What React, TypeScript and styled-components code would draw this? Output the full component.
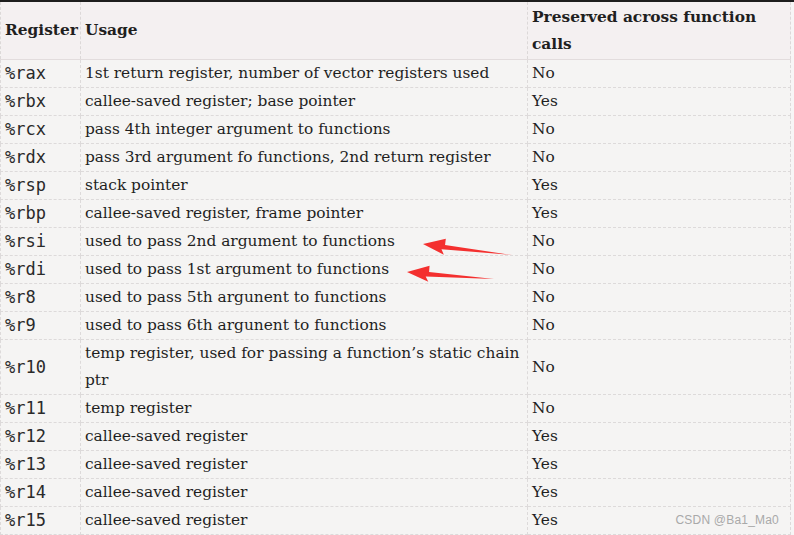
import React from "react";
import styled, { createGlobalStyle } from "styled-components";

const Global = createGlobalStyle`
  html, body { margin: 0; padding: 0; background: #f7f6f6; }
  body { width: 794px; height: 535px; overflow: hidden; }
`;

const Page = styled.div`
  position: relative;
  width: 794px;
  height: 535px;
  border-top: 2px solid #1d1d1d;
  box-sizing: border-box;
  background: #f7f6f6;
`;

const Table = styled.table`
  border-collapse: collapse;
  table-layout: fixed;
  width: 790px;
  font-family: "DejaVu Serif", "Liberation Serif", serif;
  font-size: 15.4px;
  line-height: 27px;
  color: #1f1f1f;
  background: #f5f4f3;
`;

const HeadRow = styled.tr`
  background: #f4f0f1;
`;

const Th = styled.th`
  text-align: left;
  vertical-align: middle;
  font-weight: bold;
  font-size: 15.4px;
  padding: 0 2px 0 4px;
  border: 1px dashed #dcd8d8;
  border-top: none;
  border-bottom: 1px solid #e2dcdd;
  height: 57px;
`;

const Td = styled.td<{ $mono?: boolean }>`
  vertical-align: middle;
  padding: 0 2px 0 4px;
  border: 1px dashed #dddada;
  font-family: ${(p) =>
    p.$mono ? '"DejaVu Sans Mono", "Liberation Mono", monospace' : "inherit"};
  font-size: ${(p) => (p.$mono ? "17px" : "15.4px")};
  color: ${(p) => (p.$mono ? "#2a2a2a" : "#1f1f1f")};
  white-space: ${(p) => (p.$mono ? "nowrap" : "normal")};
`;

const Overlay = styled.svg`
  position: absolute;
  left: 0;
  top: 0;
  pointer-events: none;
`;

const Watermark = styled.div`
  position: absolute;
  right: 15px;
  bottom: 8px;
  font-family: "Liberation Sans", Arial, sans-serif;
  font-size: 12px;
  color: #a9a9a9;
  letter-spacing: 0.2px;
`;

const rows: [string, string, string][] = [
  ["%rax", "1st return register, number of vector registers used", "No"],
  ["%rbx", "callee-saved register; base pointer", "Yes"],
  ["%rcx", "pass 4th integer argument to functions", "No"],
  ["%rdx", "pass 3rd argument fo functions, 2nd return register", "No"],
  ["%rsp", "stack pointer", "Yes"],
  ["%rbp", "callee-saved register, frame pointer", "Yes"],
  ["%rsi", "used to pass 2nd argument to functions", "No"],
  ["%rdi", "used to pass 1st argument to functions", "No"],
  ["%r8", "used to pass 5th argunent to functions", "No"],
  ["%r9", "used to pass 6th argunent to functions", "No"],
  ["%r10", "temp register, used for passing a function\u2019s static chain ptr", "No"],
  ["%r11", "temp register", "No"],
  ["%r12", "callee-saved register", "Yes"],
  ["%r13", "callee-saved register", "Yes"],
  ["%r14", "callee-saved register", "Yes"],
  ["%r15", "callee-saved register", "Yes"],
];

const Arrow = ({ tipX, tipY, tailX, tailY }: { tipX: number; tipY: number; tailX: number; tailY: number }) => {
  const dx = tailX - tipX;
  const dy = tailY - tipY;
  const len = Math.hypot(dx, dy);
  const ux = dx / len;
  const uy = dy / len;
  const nx = -uy;
  const ny = ux;
  const headLen = 22;
  const headW = 8;
  const shaftW = 3;
  const bx = tipX + ux * headLen;
  const by = tipY + uy * headLen;
  const pts = [
    [tipX, tipY],
    [bx + nx * headW, by + ny * headW],
    [bx - ux * 3 + nx * shaftW, by - uy * 3 + ny * shaftW],
    [tailX, tailY],
    [bx - nx * shaftW * 0.6, by - ny * shaftW * 0.6],
    [bx - nx * headW, by - ny * headW],
  ];
  return <polygon points={pts.map((p) => p.join(",")).join(" ")} fill="#f4302f" />;
};

export default function App() {
  return (
    <>
      <Global />
      <Page>
        <Table>
          <colgroup>
            <col style={{ width: 80 }} />
            <col style={{ width: 447 }} />
            <col style={{ width: 263 }} />
          </colgroup>
          <thead>
            <HeadRow>
              <Th>Register</Th>
              <Th>Usage</Th>
              <Th>Preserved across function calls</Th>
            </HeadRow>
          </thead>
          <tbody>
            {rows.map(([r, u, p]) => (
              <tr key={r}>
                <Td $mono>{r}</Td>
                <Td>{u}</Td>
                <Td>{p}</Td>
              </tr>
            ))}
          </tbody>
        </Table>
        <Overlay width="794" height="535" viewBox="0 0 794 535">
          <Arrow tipX={423} tipY={242} tailX={512} tailY={253} />
          <Arrow tipX={407} tipY={270} tailX={494} tailY={277} />
        </Overlay>
        <Watermark>CSDN @Ba1_Ma0</Watermark>
      </Page>
    </>
  );
}
